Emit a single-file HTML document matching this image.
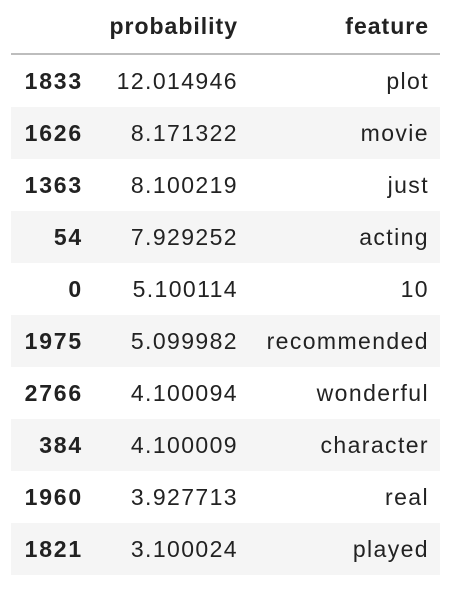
<!DOCTYPE html>
<html><head><style>
body{margin:0;background:#fff;width:450px;height:604px;font-family:"Liberation Sans",sans-serif;color:#222;}
table{position:absolute;left:11px;top:0;border-collapse:collapse;width:429px;font-size:23px;letter-spacing:1.4px;}
th,td{text-align:right;padding:0 11px 0 0;height:52px;white-space:nowrap;}
thead th{height:53px;border-bottom:2px solid #bdbdbd;font-weight:bold;letter-spacing:1px;}
tbody th{font-weight:bold;letter-spacing:1.8px;}
tbody tr:nth-child(even){background:#f5f5f5;}
.c0{width:72px}.c1{width:144px}
</style></head><body>
<table>
<thead><tr><th class="c0"></th><th class="c1">probability</th><th>feature</th></tr></thead>
<tbody>
<tr><th>1833</th><td>12.014946</td><td>plot</td></tr>
<tr><th>1626</th><td>8.171322</td><td>movie</td></tr>
<tr><th>1363</th><td>8.100219</td><td>just</td></tr>
<tr><th>54</th><td>7.929252</td><td>acting</td></tr>
<tr><th>0</th><td>5.100114</td><td>10</td></tr>
<tr><th>1975</th><td>5.099982</td><td>recommended</td></tr>
<tr><th>2766</th><td>4.100094</td><td>wonderful</td></tr>
<tr><th>384</th><td>4.100009</td><td>character</td></tr>
<tr><th>1960</th><td>3.927713</td><td>real</td></tr>
<tr><th>1821</th><td>3.100024</td><td>played</td></tr>
</tbody></table>
</body></html>
